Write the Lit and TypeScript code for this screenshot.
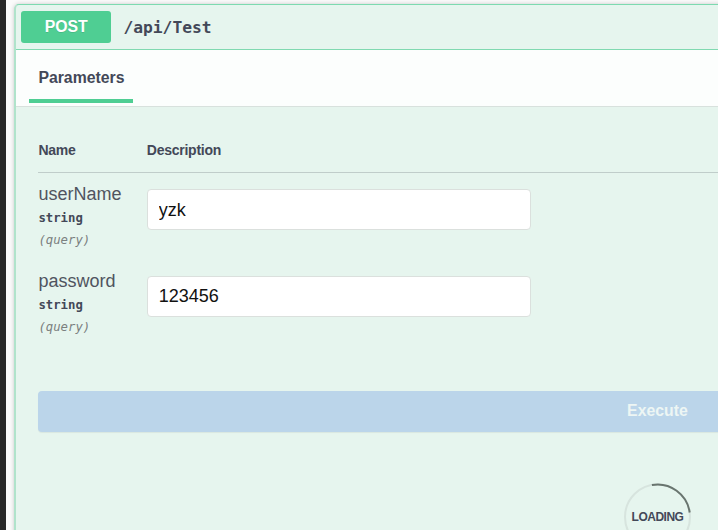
import { LitElement, html, css } from "lit";
import { customElement } from "lit/decorators.js";

interface Param {
  name: string;
  type: string;
  where: string;
  value: string;
}

@customElement("app-root")
export class AppRoot extends LitElement {
  static styles = css`
    :host {
      display: flex;
      height: 530px;
      overflow: hidden;
      background: #fafafa;
      color: #434858;
      font-family: "Liberation Sans", Arial, sans-serif;
    }
    * { box-sizing: border-box; }
    .rail { flex: none; width: 6px; background: #272727; }
    .page { flex: 1; min-width: 0; padding: 4px 0 0 8px; }
    .op {
      width: 1286px;
      height: 700px;
      border: 1px solid #7ddab0;
      border-left: 2px solid #b0e3cb;
      border-radius: 5px;
      background: #e6f5ee;
      box-shadow: 0 0 4px rgba(0, 0, 0, 0.2);
    }
    .summary {
      display: flex;
      align-items: center;
      height: 45px;
      padding: 0 0 1px 5px;
      border-bottom: 1px solid #80d9b0;
    }
    .method {
      width: 90.4px;
      height: 32px;
      border-radius: 3px;
      background: #4fce93;
      color: #fff;
      font-size: 15.8px;
      font-weight: 700;
      line-height: 32px;
      text-align: center;
      text-shadow: 0 1px 0 rgba(0, 0, 0, 0.1);
    }
    .path {
      margin-left: 12px;
      font: 700 16.3px/32px "DejaVu Sans Mono", monospace;
      padding-top: 2px;
    }
    .tabs {
      display: flex;
      height: 57px;
      padding-left: 13.4px;
      background: rgba(255, 255, 255, 0.85);
      border-bottom: 1px solid #d8e1dd;
    }
    .tab {
      width: 103.5px;
      height: 53px;
      padding-left: 9px;
      border-bottom: 4px solid #4fce93;
      font-size: 15.8px;
      font-weight: 700;
      line-height: 55px;
    }
    .content { padding: 29px 0 0 22.4px; }
    .row { display: grid; grid-template-columns: 108.4px 384px; }
    .head {
      height: 37px;
      border-bottom: 1px solid #c0cdca;
      font-size: 14px;
      letter-spacing: -0.25px;
      font-weight: 700;
      line-height: 28px;
    }
    .param { height: 87px; padding-top: 10px; }
    .name { font-size: 18px; line-height: 22px; color: #50545f; }
    .type { font: 700 12.3px/22px "DejaVu Sans Mono", monospace; padding-top: 2px; }
    .where { font: italic 12.3px/22px "DejaVu Sans Mono", monospace; color: #7b807f; }
    .field {
      width: 384px;
      height: 41px;
      margin-top: 6px;
      padding: 0 11px;
      border: 1px solid #dbe0dd;
      border-radius: 4px;
      background: #fff;
      color: #111;
      font: 18px "Liberation Sans", Arial, sans-serif;
      outline: none;
    }
    .field.lowered { padding-top: 2px; }
    .execute {
      display: block;
      width: 1238px;
      height: 41px;
      margin-top: 44px;
      padding: 0 0 1px;
      border: 0;
      border-radius: 4px;
      background: #bbd5ea;
      box-shadow: 0 1px 1px rgba(0, 0, 0, 0.06);
      color: #edf6f4;
      font: 700 15.8px "Liberation Sans", Arial, sans-serif;
    }
    .loading {
      display: grid;
      place-items: center;
      width: 68px;
      height: 68px;
      margin: 51px 0 0 585.1px;
    }
    .loading > * { grid-area: 1 / 1; }
    .loading svg { display: block; }
    .label { font-size: 12px; font-weight: 700; letter-spacing: -0.5px; }
  `;

  private params: Param[] = [
    { name: "userName", type: "string", where: "(query)", value: "yzk" },
    { name: "password", type: "string", where: "(query)", value: "123456" },
  ];

  render() {
    return html`
      <div class="rail"></div>
      <main class="page">
        <section class="op">
          <header class="summary">
            <span class="method">POST</span>
            <span class="path">/api/Test</span>
          </header>
          <nav class="tabs"><div class="tab">Parameters</div></nav>
          <div class="content">
            <div class="row head"><span>Name</span><span>Description</span></div>
            ${this.params.map(
              (p, i) => html`
                <div class="row param">
                  <div>
                    <div class="name">${p.name}</div>
                    <div class="type">${p.type}</div>
                    <div class="where">${p.where}</div>
                  </div>
                  <input class="field ${i === 0 ? "lowered" : ""}" .value=${p.value} aria-label=${p.name} />
                </div>
              `
            )}
            <button class="execute">Execute</button>
            <div class="loading">
              <svg width="68" height="68" viewBox="0 0 68 68" fill="none" stroke-width="2">
                <circle cx="34.5" cy="34" r="32.5" stroke="#d7e4de" />
                <path d="M28.9 2A32.5 32.5 0 0 1 66.7 29.5" stroke="#69756f" />
              </svg>
              <span class="label">LOADING</span>
            </div>
          </div>
        </section>
      </main>
    `;
  }
}
